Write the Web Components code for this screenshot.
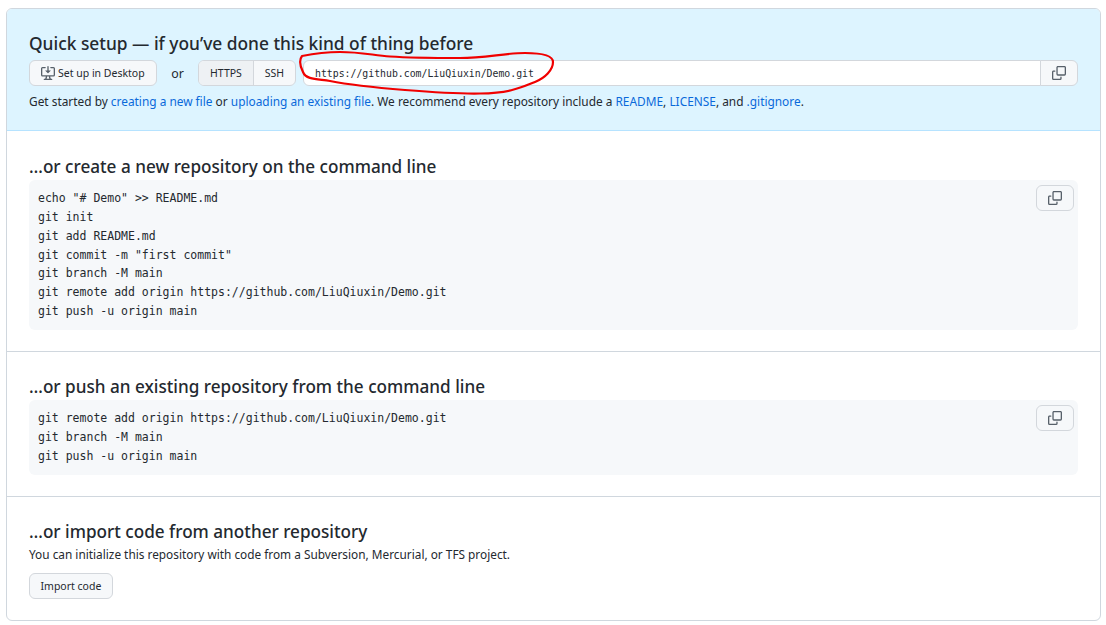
<!DOCTYPE html>
<html lang="en">
<head>
<meta charset="utf-8">
<title>Demo</title>
<style>
  html, body { margin: 0; padding: 0; background: #fff; overflow: hidden; }
  body { font-family: "Noto Sans", "Open Sans", sans-serif; color: #24292f; }
</style>
</head>
<body>
<template id="copy-icon-tpl">
  <svg width="14" height="14" viewBox="0 0 16 16" fill="#57606a" style="display:block">
    <path d="M0 6.75C0 5.784.784 5 1.75 5h1.5a.75.75 0 0 1 0 1.5h-1.5a.25.25 0 0 0-.25.25v7.5c0 .138.112.25.25.25h7.5a.25.25 0 0 0 .25-.25v-1.5a.75.75 0 0 1 1.5 0v1.5A1.75 1.75 0 0 1 9.25 16h-7.5A1.75 1.75 0 0 1 0 14.25Z"/>
    <path d="M5 1.75C5 .784 5.784 0 6.75 0h7.5C15.216 0 16 .784 16 1.75v7.5A1.75 1.75 0 0 1 14.25 11h-7.5A1.75 1.75 0 0 1 5 9.25Zm1.75-.25a.25.25 0 0 0-.25.25v7.5c0 .138.112.25.25.25h7.5a.25.25 0 0 0 .25-.25v-7.5a.25.25 0 0 0-.25-.25Z"/>
  </svg>
</template>

<gh-panel>
  <gh-section variant="blue" heading="Quick setup — if you’ve done this kind of thing before">
    <gh-clone-row></gh-clone-row>
    <gh-note>Get started by <a href="#">creating a new file</a> or <a href="#">uploading an existing file</a>. We recommend every repository include a <a href="#">README</a>, <a href="#">LICENSE</a>, and <a href="#">.gitignore</a>.</gh-note>
  </gh-section>
  <gh-section first heading="…or create a new repository on the command line">
    <gh-code>echo "# Demo" &gt;&gt; README.md
git init
git add README.md
git commit -m "first commit"
git branch -M main
git remote add origin https://github.com/LiuQiuxin/Demo.git
git push -u origin main</gh-code>
  </gh-section>
  <gh-section heading="…or push an existing repository from the command line">
    <gh-code>git remote add origin https://github.com/LiuQiuxin/Demo.git
git branch -M main
git push -u origin main</gh-code>
  </gh-section>
  <gh-section last heading="…or import code from another repository">
    <gh-note tight>You can initialize this repository with code from a Subversion, Mercurial, or TFS project.</gh-note>
    <gh-button style="margin-top:10px;padding:0 10.5px">Import code</gh-button>
  </gh-section>
</gh-panel>

<script>
class GhPanel extends HTMLElement {
  constructor() {
    super();
    this.attachShadow({ mode: "open" });
    this.shadowRoot.innerHTML = `
      <style>
        :host { display: block; margin: 8px 5px 4px 6px; border: 1px solid #d0d7de; border-radius: 6px; overflow: hidden; background: #fff; }
      </style>
      <slot></slot>`;
  }
}

class GhSection extends HTMLElement {
  constructor() {
    super();
    this.attachShadow({ mode: "open" });
    this.shadowRoot.innerHTML = `
      <style>
        :host { display: block; padding: 23px 22px 21px; border-bottom: 1px solid #d0d7de; }
        :host([first]) { padding-top: 24px; }
        :host([variant="blue"]) { background: #ddf4ff; border-bottom-color: #b6e3ff; padding-top: 22px; padding-bottom: 20px; }
        :host([last]) { border-bottom: 0; }
        h3 { margin: 0 0 1px; font-size: 17.15px; line-height: 24px; font-weight: 500; color: #24292f; white-space: nowrap; }
        :host([variant="blue"]) h3 { margin-bottom: 5px; font-size: 17.35px; }
      </style>
      <h3></h3>
      <slot></slot>`;
    this.shadowRoot.querySelector("h3").textContent = this.getAttribute("heading");
  }
}

class GhButton extends HTMLElement {
  constructor() {
    super();
    this.attachShadow({ mode: "open" });
    this.shadowRoot.innerHTML = `
      <style>
        :host { display: inline-flex; align-items: center; box-sizing: border-box; height: 26px; padding: 0 11px; gap: 3px; background: #f6f8fa; border: 1px solid #d3d7dc; border-radius: 6px; font-size: 10.5px; font-weight: 400; color: #24292f; white-space: nowrap; }
        ::slotted(svg) { flex: none; }
      </style>
      <slot></slot>`;
  }
}

class GhCopyButton extends HTMLElement {
  constructor() {
    super();
    this.attachShadow({ mode: "open" });
    this.shadowRoot.innerHTML = `
      <style>
        :host { display: flex; align-items: center; justify-content: center; box-sizing: border-box; width: 38px; height: 26px; background: #f6f8fa; border: 1px solid #d3d7dc; border-radius: 6px; }
        :host([joined]) { border-radius: 0 6px 6px 0; margin-left: -1px; }
      </style>`;
    this.shadowRoot.appendChild(document.getElementById("copy-icon-tpl").content.cloneNode(true));
  }
}

class GhCloneRow extends HTMLElement {
  constructor() {
    super();
    this.attachShadow({ mode: "open" });
    this.shadowRoot.innerHTML = `
      <style>
        :host { display: flex; align-items: center; height: 26px; position: relative; }
        .or { width: 41px; text-align: center; font-size: 12.4px; }
        .group { display: flex; height: 26px; width: 98px; box-sizing: border-box; border: 1px solid #d3d7dc; border-radius: 6px; overflow: hidden; background: #f6f8fa; font-size: 10.5px; font-weight: 400; margin-right: 7px; flex: none; }
        .group span { display: flex; align-items: center; justify-content: center; }
        .https { width: 54px; background: #eef1f4; border-right: 1px solid #d3d7dc; }
        .ssh { flex: 1; }
        .url { flex: 1; box-sizing: border-box; height: 26px; display: flex; align-items: center; padding-left: 11px; background: #fff; border: 1px solid #d3d7dc; border-radius: 6px 0 0 6px; font-family: "DejaVu Sans Mono", monospace; font-size: 9.83px; color: #24292f; }
        gh-button { width: 128px; flex: none; }
        .scribble { position: absolute; left: -29px; top: -60px; width: 1106px; height: 625px; pointer-events: none; }
      </style>
      <gh-button>
        <svg width="14" height="14" viewBox="0 0 16 16" fill="#57606a">
          <path d="m4.927 5.427 2.896 2.896a.25.25 0 0 0 .354 0l2.896-2.896A.25.25 0 0 0 10.896 5H8.75V.75a.75.75 0 1 0-1.5 0V5H5.104a.25.25 0 0 0-.177.427Z"/>
          <path d="M1.573 2.573a.25.25 0 0 0-.073.177v7.5a.25.25 0 0 0 .25.25h12.5a.25.25 0 0 0 .25-.25v-7.5a.25.25 0 0 0-.25-.25h-3a.75.75 0 1 1 0-1.5h3A1.75 1.75 0 0 1 16 2.75v7.5A1.75 1.75 0 0 1 14.25 12h-3.727c.13 1.114.368 1.977.768 2.5h.959a.75.75 0 0 1 0 1.5H3.75a.75.75 0 0 1 0-1.5h.959c.4-.523.638-1.386.768-2.5H1.75A1.75 1.75 0 0 1 0 10.25v-7.5A1.75 1.75 0 0 1 1.75 1h3a.75.75 0 0 1 0 1.5h-3a.25.25 0 0 0-.177.073ZM6.99 12c-.08.98-.27 1.81-.562 2.5h3.144c-.292-.69-.482-1.52-.562-2.5H6.99Z"/>
        </svg>
        <span>Set up in Desktop</span>
      </gh-button>
      <span class="or">or</span>
      <div class="group"><span class="https">HTTPS</span><span class="ssh">SSH</span></div>
      <div class="url">https://github.com/LiuQiuxin/Demo.git</div>
      <gh-copy-button joined></gh-copy-button>
      <svg class="scribble" viewBox="0 0 1106 625" fill="none" stroke="#f00000" stroke-width="2.2" stroke-linecap="round" stroke-linejoin="round">
        <path d="M302 56C312 54 325 52 340 52C360 52 372 55 390 56.500C405 57.500 440 58 460 58C485 58 505 53 525 53C542 53 553 55 553 62C553 70 545 78 535 82C520 88 510 93 480 93.500C455 94 430 92 405 90C380 88 355 86 330 81C318 79 306 80 303 72C300 66 299 60 302 56Z"/>
      </svg>`;
  }
}

class GhNote extends HTMLElement {
  constructor() {
    super();
    this.attachShadow({ mode: "open" });
    this.shadowRoot.innerHTML = `
      <style>
        :host { display: block; margin-top: 6px; font-size: 11.88px; line-height: 18px; color: #24292f; white-space: nowrap; }
        :host([tight]) { margin-top: 1px; font-size: 11.83px; }
        ::slotted(a) { color: #0969da; text-decoration: none; }
      </style>
      <slot></slot>`;
  }
}

class GhCode extends HTMLElement {
  constructor() {
    super();
    this.attachShadow({ mode: "open" });
    this.shadowRoot.innerHTML = `
      <style>
        :host { display: block; position: relative; background: #f6f8fa; border-radius: 6px; padding: 9.4px 9px; font-family: "DejaVu Sans Mono", monospace; font-size: 11.51px; line-height: 18.75px; color: #24292f; }
        .text { white-space: pre; }
        gh-copy-button { position: absolute; top: 5px; right: 4px; }
      </style>
      <div class="text"><slot></slot></div>
      <gh-copy-button></gh-copy-button>`;
  }
}

customElements.define("gh-panel", GhPanel);
customElements.define("gh-section", GhSection);
customElements.define("gh-button", GhButton);
customElements.define("gh-copy-button", GhCopyButton);
customElements.define("gh-clone-row", GhCloneRow);
customElements.define("gh-note", GhNote);
customElements.define("gh-code", GhCode);
</script>
</body>
</html>
